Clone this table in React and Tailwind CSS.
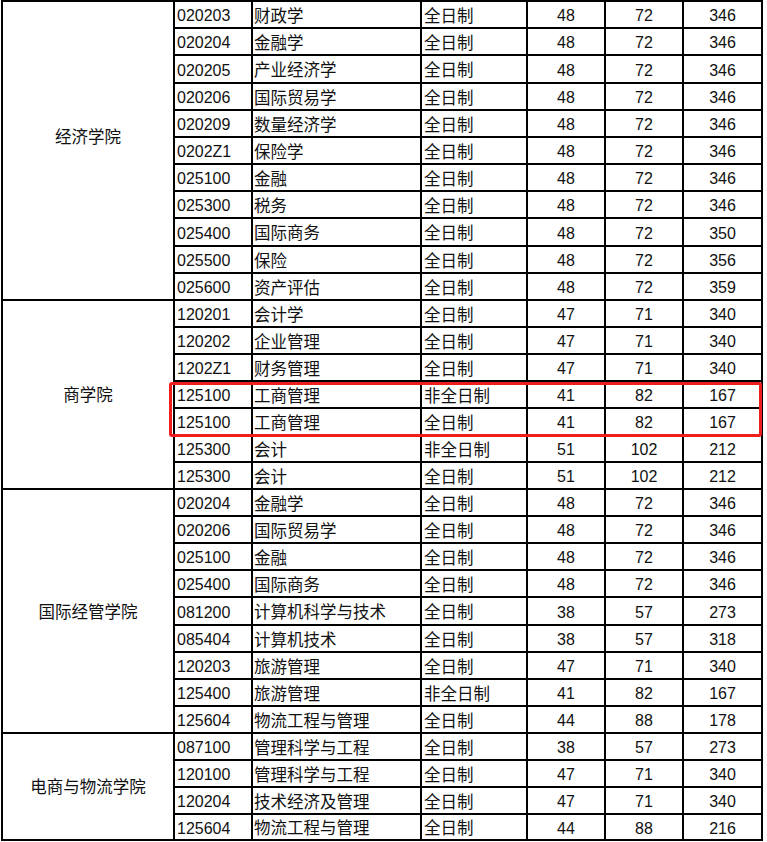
import React from "react";

const groups = [
  {
    name: "经济学院",
    hiddenAbove: true,
    rows: [
      ["020203", "财政学", "全日制", "48", "72", "346"],
      ["020204", "金融学", "全日制", "48", "72", "346"],
      ["020205", "产业经济学", "全日制", "48", "72", "346"],
      ["020206", "国际贸易学", "全日制", "48", "72", "346"],
      ["020209", "数量经济学", "全日制", "48", "72", "346"],
      ["0202Z1", "保险学", "全日制", "48", "72", "346"],
      ["025100", "金融", "全日制", "48", "72", "346"],
      ["025300", "税务", "全日制", "48", "72", "346"],
      ["025400", "国际商务", "全日制", "48", "72", "350"],
      ["025500", "保险", "全日制", "48", "72", "356"],
      ["025600", "资产评估", "全日制", "48", "72", "359"],
    ],
  },
  {
    name: "商学院",
    rows: [
      ["120201", "会计学", "全日制", "47", "71", "340"],
      ["120202", "企业管理", "全日制", "47", "71", "340"],
      ["1202Z1", "财务管理", "全日制", "47", "71", "340"],
      ["125100", "工商管理", "非全日制", "41", "82", "167"],
      ["125100", "工商管理", "全日制", "41", "82", "167"],
      ["125300", "会计", "非全日制", "51", "102", "212"],
      ["125300", "会计", "全日制", "51", "102", "212"],
    ],
  },
  {
    name: "国际经管学院",
    rows: [
      ["020204", "金融学", "全日制", "48", "72", "346"],
      ["020206", "国际贸易学", "全日制", "48", "72", "346"],
      ["025100", "金融", "全日制", "48", "72", "346"],
      ["025400", "国际商务", "全日制", "48", "72", "346"],
      ["081200", "计算机科学与技术", "全日制", "38", "57", "273"],
      ["085404", "计算机技术", "全日制", "38", "57", "318"],
      ["120203", "旅游管理", "全日制", "47", "71", "340"],
      ["125400", "旅游管理", "非全日制", "41", "82", "167"],
      ["125604", "物流工程与管理", "全日制", "44", "88", "178"],
    ],
  },
  {
    name: "电商与物流学院",
    rows: [
      ["087100", "管理科学与工程", "全日制", "38", "57", "273"],
      ["120100", "管理科学与工程", "全日制", "47", "71", "340"],
      ["120204", "技术经济及管理", "全日制", "47", "71", "340"],
      ["125604", "物流工程与管理", "全日制", "44", "88", "216"],
    ],
  },
];

const spans = {
  11: "row-span-11",
  7: "row-span-7",
  9: "row-span-9",
  4: "row-span-4",
};

function Cell({ children, align = "left", className = "" }) {
  const pos = align === "center" ? "justify-center" : "justify-start";
  return (
    <div className={`bg-white flex items-center pt-[3px] ${pos} ${className}`}>
      {children}
    </div>
  );
}

export default function App() {
  return (
    <div
      className="min-h-screen bg-white text-[16px] text-[#111]"
      style={{ fontFamily: '"Liberation Sans", "Noto Sans CJK SC", sans-serif' }}
    >
      <div className="relative ml-[1px] w-fit">
        <div className="grid grid-cols-[170px_76px_167px_104px_76px_76px_77px] grid-rows-[25px_25px_26px_25px_25px_25px_25px_25px_26px_25px_25px_25px_25px_25px_25px_25px_25px_25px_25px_25px_25px_25px_26px_25px_25px_25px_25px_25px_25px_25px_24px] gap-[2px] bg-black p-[2px]">
          {groups.map((g) => (
            <React.Fragment key={g.name}>
              <div
                className={`bg-white col-start-1 flex items-center justify-center text-[16.5px] ${spans[g.rows.length]} ${g.hiddenAbove ? "pb-[27px]" : "pt-[2px]"}`}
              >
                {g.name}
              </div>
              {g.rows.map((r, i) => (
                <React.Fragment key={i}>
                  <Cell className="col-start-2 pl-[2px]">{r[0]}</Cell>
                  <Cell className="pl-[1px] text-[16.5px]">{r[1]}</Cell>
                  <Cell className="pl-[2px] text-[16.5px]">{r[2]}</Cell>
                  <Cell align="center">{r[3]}</Cell>
                  <Cell align="center">{r[4]}</Cell>
                  <Cell align="center">{r[5]}</Cell>
                </React.Fragment>
              ))}
            </React.Fragment>
          ))}
        </div>
        <div className="absolute left-[168px] top-[382px] w-[593px] h-[55px] border-[3px] border-[#f01d1d] rounded-[3px] pointer-events-none" />
      </div>
    </div>
  );
}
